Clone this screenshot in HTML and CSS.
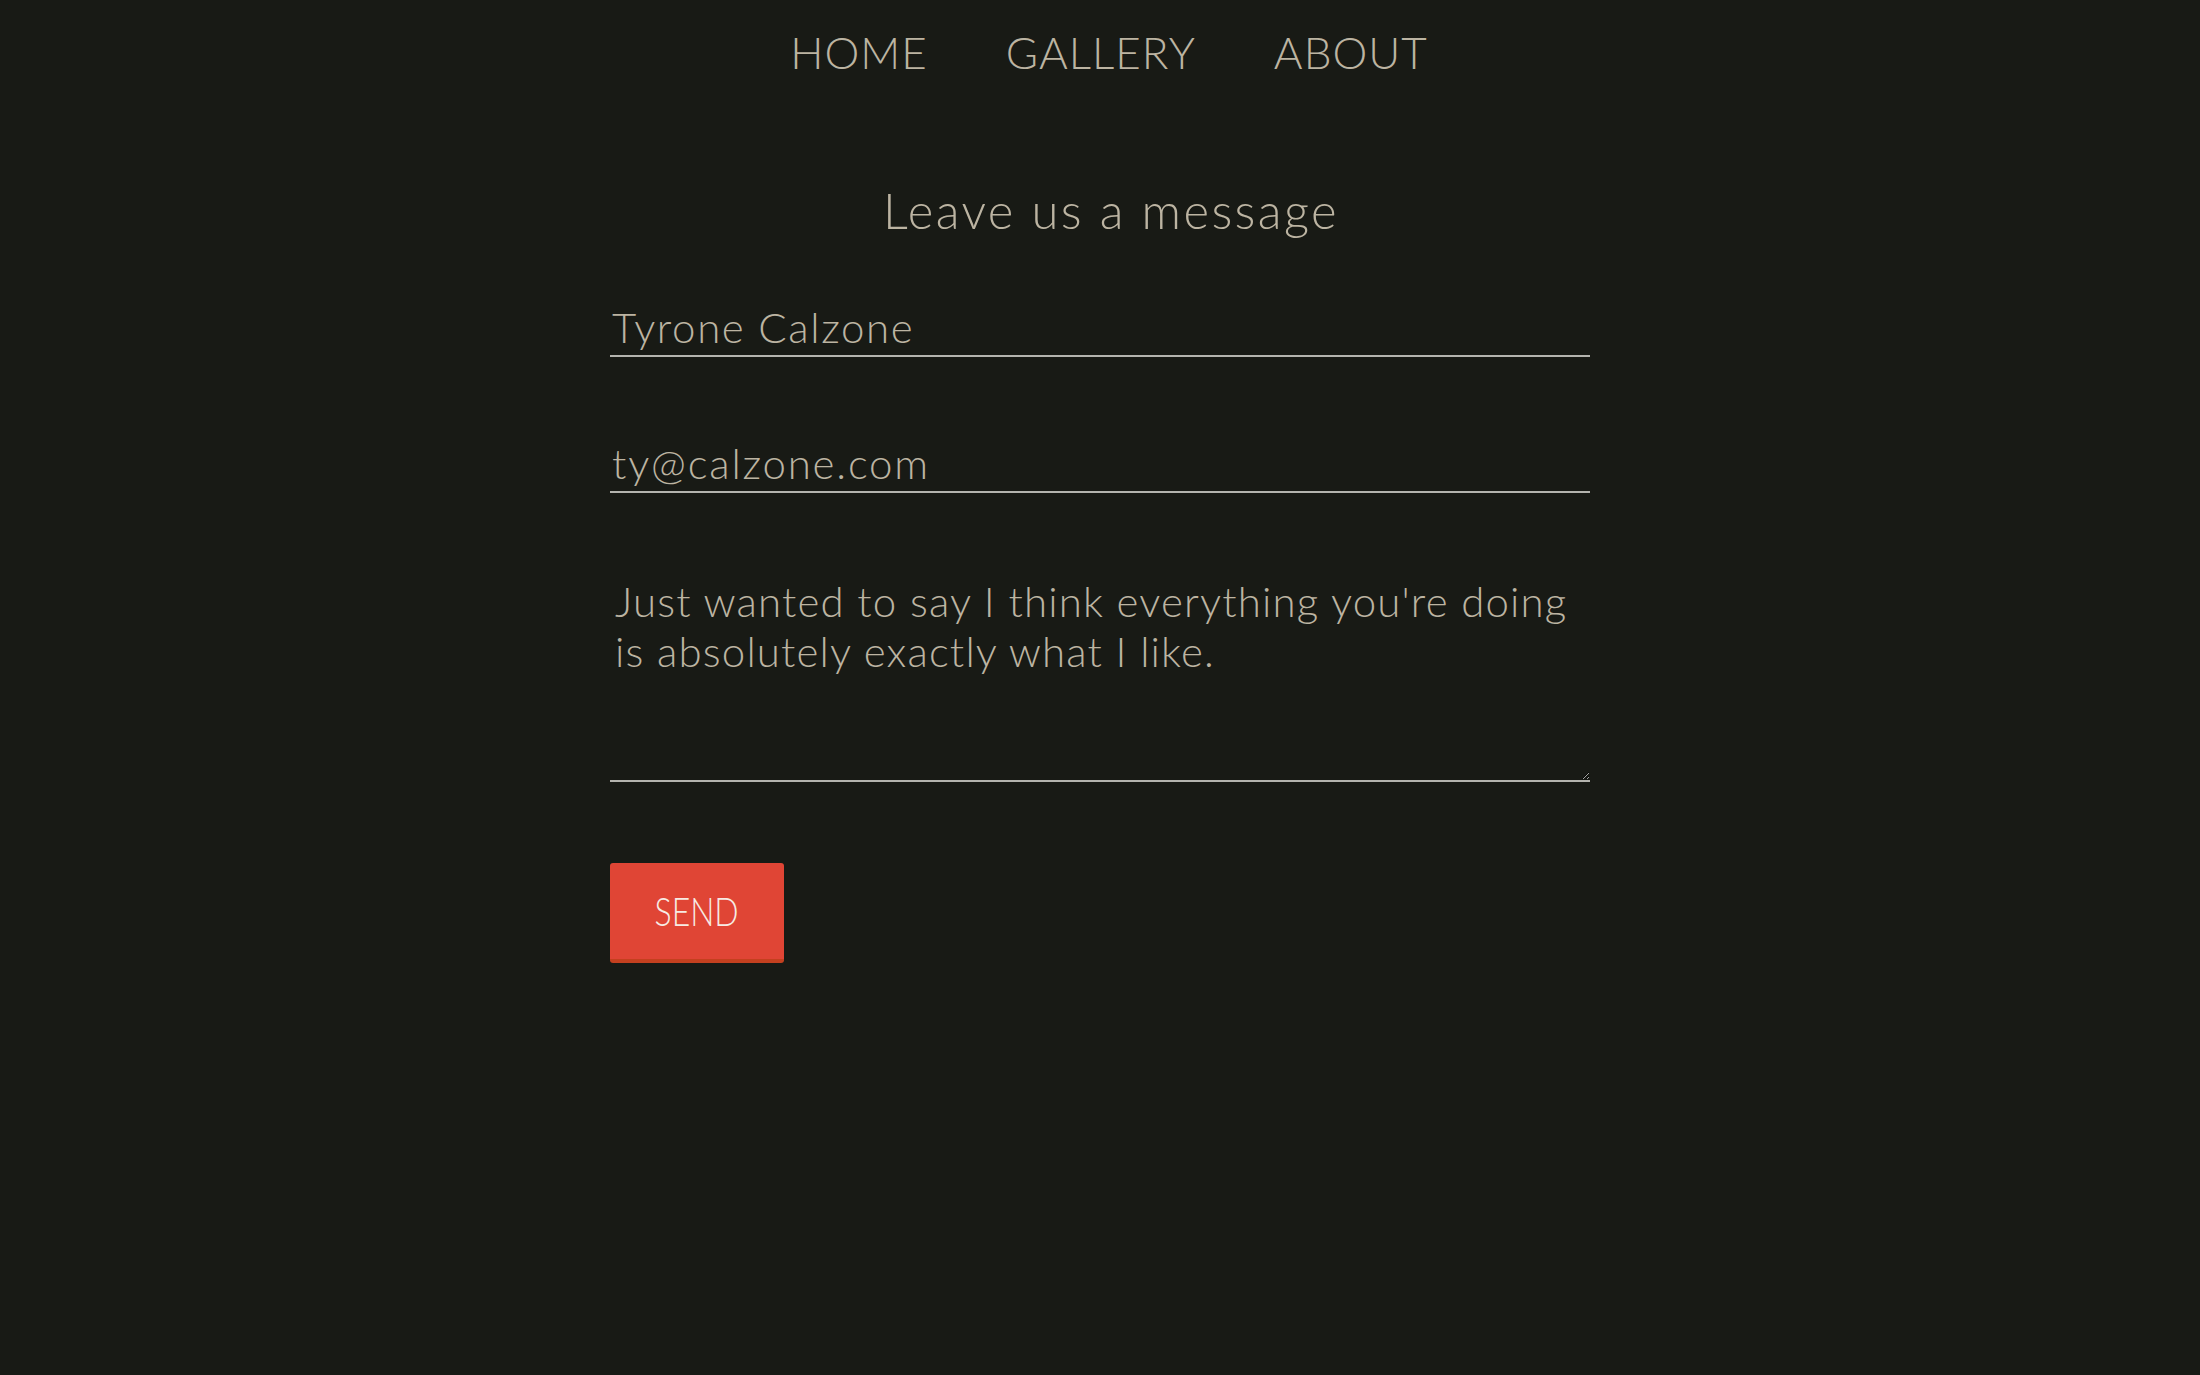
FILE: index.html
```html
<!DOCTYPE html>
<html lang="en">
<head>
<meta charset="utf-8">
<title>Leave us a message</title>
<link rel="stylesheet" href="styles.css">
</head>
<body>
<nav class="nav">
  <a class="nav-link" href="#">HOME</a>
  <a class="nav-link" href="#">GALLERY</a>
  <a class="nav-link" href="#">ABOUT</a>
</nav>
<main class="contact">
  <h1 class="contact-title">Leave us a message</h1>
  <form class="contact-form">
    <input class="field field-name" type="text" value="Tyrone Calzone">
    <input class="field field-email" type="email" value="ty@calzone.com">
    <textarea class="field-message">Just wanted to say I think everything you're doing is absolutely exactly what I like.</textarea>
    <button class="send-btn" type="button"><span class="send-label">SEND</span></button>
  </form>
</main>
</body>
</html>
```
FILE: styles.css
```css
html, body {
  margin: 0;
  padding: 0;
}
body {
  background: #181a15;
  color: #bcb4a2;
  font-family: Lato, "Open Sans", sans-serif;
  font-weight: 300;
  min-height: 1375px;
}
.nav {
  display: flex;
  justify-content: center;
  gap: 78px;
  padding: 24px 0 0 18px;
  font-size: 44px;
  line-height: 56px;
}
.nav-link {
  color: #bcb4a2;
  text-decoration: none;
  letter-spacing: 1px;
}
.contact {
  width: 980px;
  margin: 0 auto;
}
.contact-title {
  margin: 100px 0 0;
  padding-left: 22px;
  text-align: center;
  font-size: 49px;
  line-height: 60px;
  font-weight: 300;
  letter-spacing: 2.4px;
}
.contact-form {
  display: flex;
  flex-direction: column;
  align-items: flex-start;
  margin-top: 59px;
}
.field {
  display: block;
  width: 100%;
  height: 58px;
  box-sizing: border-box;
  padding: 0 2px;
  margin: 0;
  border: none;
  border-bottom: 2px solid #b4b4ae;
  background: transparent;
  color: #bcb4a2;
  font-family: inherit;
  font-weight: 300;
  font-size: 42px;
  letter-spacing: 1.6px;
  outline: none;
}
.field-email {
  margin-top: 78px;
  letter-spacing: 1.8px;
}
.field-message {
  display: block;
  width: 100%;
  height: 227px;
  box-sizing: border-box;
  margin: 62px 0 0;
  padding: 21px 5px 0;
  border: none;
  border-bottom: 2px solid #b4b4ae;
  background: transparent;
  color: #bcb4a2;
  color-scheme: dark;
  font-family: inherit;
  font-weight: 300;
  font-size: 42px;
  line-height: 50px;
  letter-spacing: 1.15px;
  outline: none;
}
.send-btn {
  margin-top: 81px;
  width: 174px;
  height: 100px;
  box-sizing: border-box;
  border: none;
  border-bottom: 4px solid #c4401f;
  border-radius: 3px;
  background: #e04535;
  color: #f7ebe4;
  font-family: Lato, sans-serif;
  font-weight: 300;
  font-size: 40px;
  padding: 0;
  cursor: pointer;
}
.send-label {
  display: inline-block;
  transform: scaleX(0.8);
}
```
